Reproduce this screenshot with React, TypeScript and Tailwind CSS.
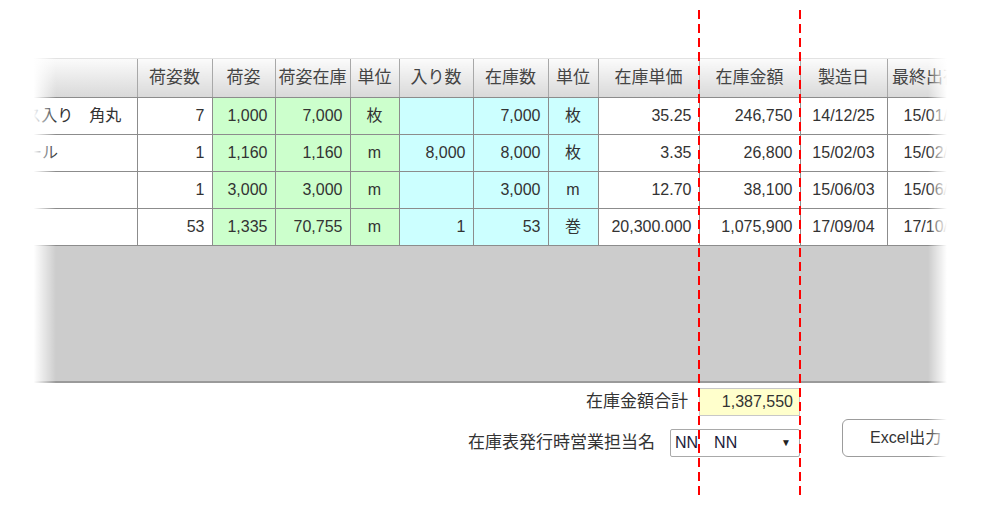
import React from 'react';

type Row = {
  name: string;
  qty: string;
  pack: string;
  packStock: string;
  unit1: string;
  inCount: string;
  stock: string;
  unit2: string;
  price: string;
  amount: string;
  made: string;
  lastOut: string;
};

const rows: Row[] = [
  { name: 'ケース入り　角丸', qty: '7', pack: '1,000', packStock: '7,000', unit1: '枚', inCount: '', stock: '7,000', unit2: '枚', price: '35.25', amount: '246,750', made: '14/12/25', lastOut: '15/01/09' },
  { name: 'ビニール', qty: '1', pack: '1,160', packStock: '1,160', unit1: 'm', inCount: '8,000', stock: '8,000', unit2: '枚', price: '3.35', amount: '26,800', made: '15/02/03', lastOut: '15/02/05' },
  { name: '', qty: '1', pack: '3,000', packStock: '3,000', unit1: 'm', inCount: '', stock: '3,000', unit2: 'm', price: '12.70', amount: '38,100', made: '15/06/03', lastOut: '15/06/26' },
  { name: '', qty: '53', pack: '1,335', packStock: '70,755', unit1: 'm', inCount: '1', stock: '53', unit2: '巻', price: '20,300.000', amount: '1,075,900', made: '17/09/04', lastOut: '17/10/23' },
];

const headers = ['', '荷姿数', '荷姿', '荷姿在庫', '単位', '入り数', '在庫数', '単位', '在庫単価', '在庫金額', '製造日', '最終出荷日'];
const widths = [137, 75, 63, 75, 49, 74, 75, 50, 101, 101, 87, 95];

const cell = 'border border-[#8c8c8c] h-[37px] p-0 whitespace-nowrap overflow-hidden';
const num = `${cell} text-right pr-[7px] text-[16px]`;
const mid = `${cell} text-center text-[16px]`;
const green = 'bg-[#ccffcc]';
const cyan = 'bg-[#ccffff]';

export default function App() {
  return (
    <div className="relative w-[982px] h-[508px] overflow-hidden bg-white text-[#333] font-['Liberation_Sans','Noto_Sans_CJK_JP',sans-serif]">
      <div className="pt-[58px]">
        <div className="border-t border-[#e2e2e2]">
          <table className="table-fixed border-collapse w-[982px]">
            <colgroup>
              {widths.map((w, i) => (
                <col key={i} style={{ width: w }} />
              ))}
            </colgroup>
            <thead>
              <tr>
                {headers.map((h, i) => (
                  <th
                    key={i}
                    className="h-[38px] p-0 font-normal text-[17px] text-[#444] text-center whitespace-nowrap overflow-hidden border-r border-b border-r-[#a8a8a8] border-b-[#8c8c8c] bg-linear-to-b from-[#fbfbfb] to-[#d9d9d9]"
                  >
                    {h}
                  </th>
                ))}
              </tr>
            </thead>
            <tbody>
              {rows.map((r, i) => (
                <tr key={i}>
                  <td className={`${cell} border-l-0 text-left text-[16px]`}>
                    <div className="-ml-[6px]">{r.name}</div>
                  </td>
                  <td className={num}>{r.qty}</td>
                  <td className={`${num} ${green}`}>{r.pack}</td>
                  <td className={`${num} ${green}`}>{r.packStock}</td>
                  <td className={`${mid} ${green}`}>{r.unit1}</td>
                  <td className={`${num} ${cyan}`}>{r.inCount}</td>
                  <td className={`${num} ${cyan}`}>{r.stock}</td>
                  <td className={`${mid} ${cyan}`}>{r.unit2}</td>
                  <td className={num}>{r.price}</td>
                  <td className={num}>{r.amount}</td>
                  <td className={mid}>{r.made}</td>
                  <td className={`${mid} text-left pl-[16px]`}>{r.lastOut}</td>
                </tr>
              ))}
            </tbody>
          </table>
          <div className="h-[137px] bg-[#cccccc] border-b-2 border-[#9a9a9a]" />
        </div>

        <div className="flex">
          <div className="w-[800px] flex flex-col items-end">
            <div className="mt-[5px] flex items-center">
              <span className="text-[17px] mr-[11px]">在庫金額合計</span>
              <div className="w-[101px] h-[28px] bg-[#ffffcc] border border-[#c8c8c8] text-[16px] text-right pr-[6px] leading-[26px]">
                1,387,550
              </div>
            </div>
            <div className="mt-[13px] flex items-center">
              <span className="text-[17px] mr-[15px]">在庫表発行時営業担当名</span>
              <div className="w-[130px] h-[28px] bg-white border border-[#a9a9a9] rounded-[2px] flex items-center pl-[4px] pr-[8px] text-[16px] text-[#1c1c3a]">
                <span className="flex-1">NN　NN</span>
                <span className="text-[10px] text-[#222]">▼</span>
              </div>
            </div>
          </div>
          <button className="ml-[42px] mt-[36px] w-[130px] h-[38px] shrink-0 rounded-[6px] border border-[#9c9c9c] bg-white text-[16px] text-[#333] text-left pl-[27px]">
            Excel出力
          </button>
        </div>
      </div>

      {/* edge fades */}
      <div className="absolute left-0 top-0 h-full w-[56px] bg-linear-to-r from-white from-60% to-transparent" />
      <div className="absolute left-[928px] top-0 h-full w-[54px] bg-linear-to-l from-white from-65% to-transparent" />

      {/* red dashed guides */}
      <div className="absolute left-[698px] top-[10px] h-[486px] w-[2px] bg-[repeating-linear-gradient(to_bottom,#ff0000_0_9px,transparent_9px_14px)]" />
      <div className="absolute left-[799px] top-[10px] h-[486px] w-[2px] bg-[repeating-linear-gradient(to_bottom,#ff0000_0_9px,transparent_9px_14px)]" />
    </div>
  );
}
